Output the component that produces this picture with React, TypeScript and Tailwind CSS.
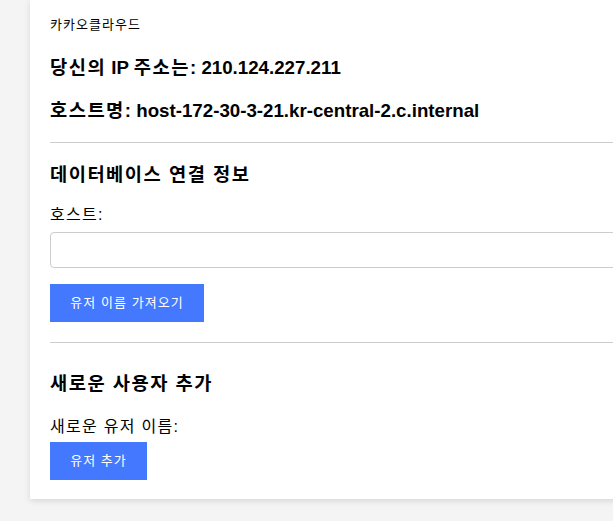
import React, { useState } from 'react';

// 한글 글자폭 보정 (Noto CJK 한글이 조금 좁음)
const Ko = ({ children }: { children: React.ReactNode }) => (
  <span className="tracking-[0.08em]">{children}</span>
);

export default function App() {
  const [host, setHost] = useState('');

  return (
    <main
      className="h-[521px] overflow-hidden bg-[#f4f4f4] pl-[30px] text-black"
      style={{ fontFamily: '"Liberation Sans", Arial, "Noto Sans CJK KR", sans-serif' }}
    >
      <div className="w-[800px] bg-white px-5 pt-[17px] pb-[19px] shadow-[0_2px_6px_rgba(0,0,0,0.12)]">
        {/* 헤더 */}
        <div className="text-[13px] leading-4">
          <Ko>카카오클라우드</Ko>
        </div>

        <h3 className="mt-[24px] text-[18.72px] leading-[22px] font-bold">
          <Ko>당신의</Ko> IP <Ko>주소는</Ko>: 210.124.227.211
        </h3>
        <h3 className="mt-[21px] text-[18.72px] leading-[22px] font-bold">
          <Ko>호스트명</Ko>: host-172-30-3-21.kr-central-2.c.internal
        </h3>

        <hr className="mt-5 border-t border-[#cccccc]" />

        {/* 데이터베이스 연결 정보 */}
        <h3 className="mt-[21px] text-[18.72px] leading-[22px] font-bold">
          <Ko>데이터베이스 연결 정보</Ko>
        </h3>
        <label className="mt-5 block text-[16px] leading-[18px]">
          <Ko>호스트</Ko>:
        </label>
        <input
          type="text"
          value={host}
          onChange={e => setHost(e.target.value)}
          className="mt-2 block h-9 w-full rounded border border-[#cccccc] px-2 text-[14px] outline-none"
        />
        <button
          type="button"
          className="mt-4 block h-[38px] w-[154px] bg-[#4479ff] text-[13px] text-white"
        >
          <Ko>유저 이름 가져오기</Ko>
        </button>

        <hr className="mt-5 border-t border-[#cccccc]" />

        {/* 새로운 사용자 추가 */}
        <h3 className="mt-[30px] text-[18.72px] leading-[22px] font-bold">
          <Ko>새로운 사용자 추가</Ko>
        </h3>
        <label className="mt-[23px] block text-[16px] leading-[18px]">
          <Ko>새로운 유저 이름</Ko>:
        </label>
        <button
          type="button"
          className="mt-[6px] block h-[38px] w-[97px] bg-[#4479ff] text-[13px] text-white"
        >
          <Ko>유저 추가</Ko>
        </button>
      </div>
    </main>
  );
}
